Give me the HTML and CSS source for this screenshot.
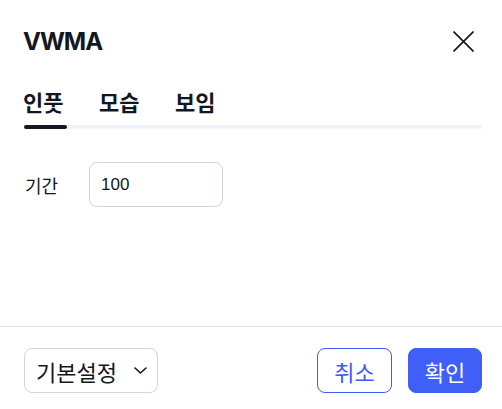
FILE: index.html
```html
<!DOCTYPE html>
<html lang="ko">
<head>
<meta charset="utf-8">
<link rel="stylesheet" href="styles.css">
</head>
<body>
<div class="dialog">
  <div class="header">
    <div class="title">VWMA</div>
    <button class="close" aria-label="닫기">
      <svg width="21" height="21" viewBox="0 0 21 21"><path d="M0.5 0.5L20.5 20.5M20.5 0.5L0.5 20.5" stroke="#131722" stroke-width="1.6" fill="none"/></svg>
    </button>
  </div>
  <div class="tabs">
    <div class="tab-row">
      <div class="tab active">인풋</div>
      <div class="tab">모습</div>
      <div class="tab">보임</div>
    </div>
    <div class="track"><div class="indicator"></div></div>
  </div>
  <div class="body">
    <div class="field">
      <label class="label">기간</label>
      <div class="input">100</div>
    </div>
  </div>
  <div class="footer">
    <button class="preset">기본설정
      <svg width="13" height="7" viewBox="0 0 13 7"><path d="M1 1L6.5 6L12 1" stroke="#131722" stroke-width="1.6" fill="none" stroke-linecap="round" stroke-linejoin="round"/></svg>
    </button>
    <div class="actions">
      <button class="btn cancel">취소</button>
      <button class="btn ok">확인</button>
    </div>
  </div>
</div>
</body>
</html>
```

FILE: styles.css
```css
* { box-sizing: border-box; }
html, body { margin: 0; padding: 0; background: #fff; }
body { font-family: "Noto Sans CJK KR", "Noto Sans", sans-serif; color: #131722; }
.dialog { width: 502px; height: 409px; display: flex; flex-direction: column; }
.header { height: 82px; display: flex; align-items: center; justify-content: space-between; padding: 0 28px 0 23px; }
.title { font-family: Inter, "Noto Sans", sans-serif; font-weight: 700; font-size: 24px; letter-spacing: -1px; color: #131722; }
.close { width: 21px; height: 21px; padding: 0; border: 0; background: none; display: block; }
.close svg { display: block; }
.tabs { padding: 0 20px 0 24px; }
.tab-row { display: flex; gap: 32px; height: 38px; align-items: center; margin-left: -1px; }
.tab { font-size: 22px; font-weight: 700; line-height: 38px; width: 44px; color: #131722; }
.track { margin-top: 5px; height: 4px; background: #f0f3fa; border-radius: 2px; display: flex; }
.indicator { width: 43px; height: 4px; background: #131722; border-radius: 2px; }
.body { flex: 1; padding: 33px 24px 0; }
.field { display: flex; align-items: center; }
.label { width: 65px; font-size: 18px; color: #131722; padding-left: 1px; }
.input { width: 134px; height: 45px; border: 1px solid #d1d4dc; border-radius: 8px; padding-left: 11px; display: flex; align-items: center; font-family: "Liberation Sans", Arial, sans-serif; font-size: 17px; color: #131722; }
.footer { border-top: 1px solid #e0e3eb; padding: 21px 20px 16px 24px; display: flex; justify-content: space-between; align-items: center; }
button { font-family: inherit; cursor: pointer; }
.preset { width: 134px; height: 45px; border: 1px solid #d1d4dc; border-radius: 8px; background: #fff; padding: 0 10px 0 11px; display: flex; align-items: center; justify-content: space-between; font-size: 22px; color: #131722; }
.preset svg { display: block; }
.actions { display: flex; gap: 16px; }
.btn { height: 45px; width: 75px; border-radius: 8px; font-size: 22px; padding: 0; display: flex; align-items: center; justify-content: center; }
.cancel { background: #fff; border: 1px solid #3d5cf5; color: #3d5cf5; }
.ok { background: #3f5ff6; border: 1px solid #3f5ff6; color: #fff; width: 74px; }
```
